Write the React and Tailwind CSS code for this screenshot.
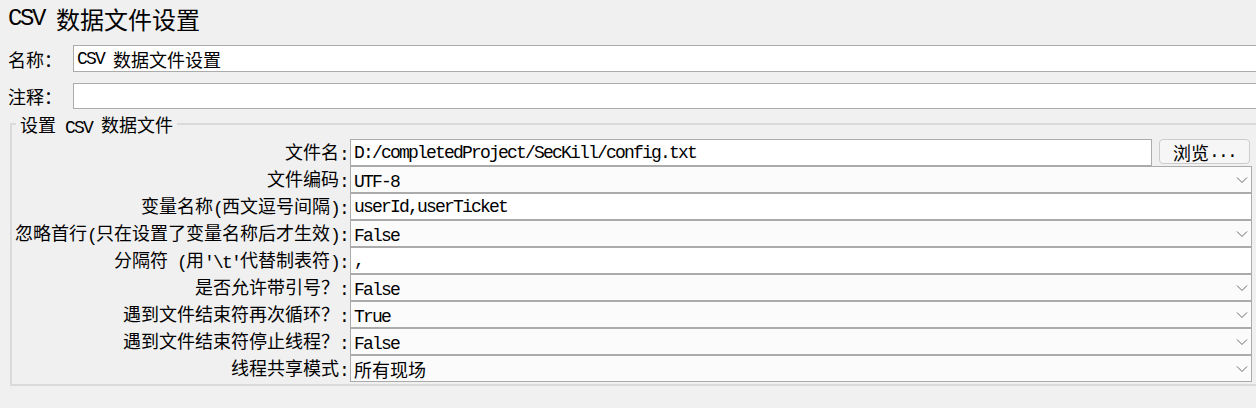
import React from "react";

const LAT = "font-['Liberation_Mono',monospace] text-[18px] tracking-[-1.8px] align-[-1px]";
const LAT_BIG = "font-['Liberation_Mono',monospace] text-[24px] tracking-[-2.4px] align-[-2px]";

function T({ s, big }) {
  const parts = s.split(/([\x20-\x7e]+)/);
  return parts.map((p, i) =>
    /^[\x20-\x7e]+$/.test(p) ? (
      <span key={i} className={(big ? LAT_BIG : LAT) + " whitespace-pre"}>
        {p}
      </span>
    ) : (
      <React.Fragment key={i}>{p}</React.Fragment>
    )
  );
}

function Chevron() {
  return (
    <svg width="12" height="8" viewBox="0 0 12 8" className="shrink-0">
      <path d="M1 1.5 L6 6.5 L11 1.5" fill="none" stroke="#6a6a6a" strokeWidth="1" />
    </svg>
  );
}

function TextField({ value, className = "" }) {
  return (
    <div
      className={
        "h-[27px] border border-[#ababab] bg-white flex items-center pl-[3px] overflow-hidden whitespace-nowrap " +
        className
      }
    >
      <T s={value} />
    </div>
  );
}

function SelectField({ value }) {
  return (
    <div className="h-[27px] flex-1 border border-[#ababab] bg-[#fbfbfb] flex items-center pl-[3px] pr-[3px] overflow-hidden whitespace-nowrap">
      <div className="flex-1">
        <T s={value} />
      </div>
      <Chevron />
    </div>
  );
}

const rows = [
  { label: "文件名:", value: "D:/completedProject/SecKill/config.txt", type: "file" },
  { label: "文件编码:", value: "UTF-8", type: "select" },
  { label: "变量名称(西文逗号间隔):", value: "userId,userTicket", type: "text" },
  { label: "忽略首行(只在设置了变量名称后才生效):", value: "False", type: "select" },
  { label: "分隔符 (用'\\t'代替制表符):", value: ",", type: "text" },
  { label: "是否允许带引号？:", value: "False", type: "select" },
  { label: "遇到文件结束符再次循环？:", value: "True", type: "select" },
  { label: "遇到文件结束符停止线程？:", value: "False", type: "select" },
  { label: "线程共享模式:", value: "所有现场", type: "select" },
];

export default function App() {
  return (
    <div className="w-[1256px] h-[408px] bg-[#f0f0f0] overflow-hidden text-black text-[18px] leading-none font-['Noto_Sans_CJK_SC',sans-serif]">
      <div className="h-[38px] flex items-center pl-[8px] text-[24px] whitespace-nowrap">
        <T s="CSV 数据文件设置" big />
      </div>

      <div className="mt-[7px] flex items-center w-[1300px]">
        <div className="w-[73px] shrink-0 pl-[8px]">名称：</div>
        <TextField value="CSV 数据文件设置" className="flex-1 pl-[3px]" />
      </div>

      <div className="mt-[11px] flex items-center w-[1300px]">
        <div className="w-[73px] shrink-0 pl-[8px]">注释：</div>
        <div className="h-[26px] flex-1 border border-[#ababab] bg-white" />
      </div>

      <div className="relative mt-[14px] ml-[10px] w-[1300px] h-[263px] border-l-2 border-t-2 border-b-2 border-[#dadada] pt-[14px]">
        <div className="absolute left-[4px] -top-[12px] px-[4px] bg-[#f0f0f0] leading-[22px] whitespace-nowrap">
          <T s="设置 CSV 数据文件" />
        </div>

        <div className="w-[1240px] flex flex-col">
          {rows.map((r, i) => (
            <div key={i} className="flex items-center h-[27px]">
              <div className="w-[338px] shrink-0 text-right pr-[2px] whitespace-nowrap">
                <T s={r.label} />
              </div>
              {r.type === "file" && (
                <>
                  <TextField value={r.value} className="flex-1" />
                  <div className="ml-[7px] mr-[2px] w-[91px] h-[25px] self-start shrink-0 rounded-[4px] border border-[#cccccc] bg-[#f6f6f6] flex items-center justify-center whitespace-nowrap">
                    浏览<span className={LAT}>...</span>
                  </div>
                </>
              )}
              {r.type === "text" && <TextField value={r.value} className="flex-1" />}
              {r.type === "select" && <SelectField value={r.value} />}
            </div>
          ))}
        </div>
      </div>
    </div>
  );
}
